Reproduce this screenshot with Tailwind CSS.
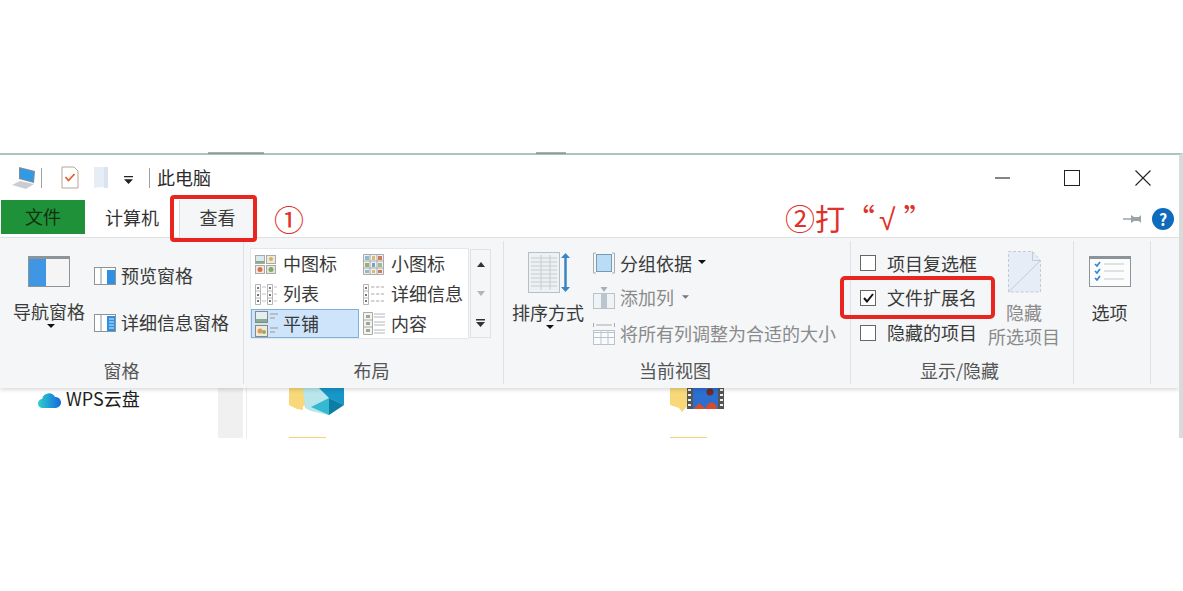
<!DOCTYPE html>
<html lang="zh-CN">
<head>
<meta charset="UTF-8" />
<title>此电脑</title>
<script src="https://cdn.jsdelivr.net/npm/@tailwindcss/browser@4"></script>
</head>
<body class="bg-white h-[591px] overflow-hidden text-[18px] leading-[24px] text-[#3a3a3a] [font-family:'Noto_Sans_CJK_SC','Liberation_Sans',sans-serif]">
<div class="pt-[153px] relative">
  <!-- window -->
  <div class="w-[1183px] h-[285px] overflow-hidden border-t-2 border-t-[#a9c6bc] border-r-4 border-r-[#d5dcda] bg-white flex flex-col">

    <!-- title bar -->
    <div class="h-[45px] flex items-center shrink-0">
      <svg class="ml-[12px] w-[24px] h-[22px]" viewBox="0 0 24 22"><path d="M7 0l16 4-1 12-15-4z" fill="#7f8c96"/><path d="M8 1.500l14 3.500-1 9.500-13-3.500z" fill="#2f9be6"/><path d="M0 18l8-4 14 3-8 5z" fill="#c9ced2"/></svg>
      <div class="ml-[5px] w-px h-[20px] bg-[#a0a0a0]"></div>
      <svg class="ml-[19px] w-[18px] h-[23px]" viewBox="0 0 18 23"><path d="M1 1h12l4 4v17H1z" fill="#fff" stroke="#b9a698"/><path d="M4.500 11l3 3.500L13.500 8" fill="none" stroke="#e5602a" stroke-width="1.800"/></svg>
      <svg class="ml-[15px] w-[15px] h-[23px]" viewBox="0 0 15 23"><path d="M0 1h14v21l-6-1-8 1z" fill="#e6edf5"/><path d="M10 1h4v21h-4z" fill="#dbe4ee"/></svg>
      <svg class="ml-[15px] w-[9px] h-[9px] mt-[5px]" viewBox="0 0 10 10"><path d="M0 0h10v1.500H0zM0 3.500h10L5 9z" fill="#222"/></svg>
      <div class="ml-[16px] w-px h-[20px] bg-[#a0a0a0]"></div>
      <span class="ml-[7px] -translate-y-px text-[#2b2b2b]">此电脑</span>
      <svg class="ml-[784px] w-[16px] h-[16px]" viewBox="0 0 16 16"><path d="M0 8h15" stroke="#333" stroke-width="1.200"/></svg>
      <svg class="ml-[53px] w-[16px] h-[16px]" viewBox="0 0 16 16"><rect x=".5" y=".5" width="15" height="15" fill="none" stroke="#222"/></svg>
      <svg class="ml-[55px] w-[16px] h-[16px]" viewBox="0 0 16 16"><path d="M.5.500l15 15M15.500.500l-15 15" stroke="#222" stroke-width="1.100"/></svg>
    </div>

    <!-- tabs -->
    <div class="h-[38px] flex shrink-0 border-b border-[#e2e4e6]">
      <div class="ml-px w-[84px] h-[34px] bg-[#1f9139] text-[#12300f] flex items-center justify-center"><span class="-translate-y-px">文件</span></div>
      <div class="ml-[20px] h-[34px] flex items-center text-[#333]">计算机</div>
      <div class="ml-[20px] w-[76px] h-[38px] bg-[#f4f6f8] border-l border-[#d8dadd] flex items-center justify-center"><span class="-translate-y-[2px]">查看</span></div>
      <div class="ml-auto mr-[5px] h-[34px] flex items-center gap-[10px] pt-[3px]">
        <svg class="w-[19px] h-[10px]" viewBox="0 0 19 10"><path d="M0 5h8" stroke="#9aa3a7" stroke-width="1.500"/><path d="M8 1l3 2h5l2-2v8l-2-2h-5l-3 2z" fill="#9aa3a7"/></svg>
        <div class="w-[22px] h-[22px] rounded-full bg-[#0f6cbd] text-white text-[16px] font-bold flex items-center justify-center">?</div>
      </div>
    </div>

    <!-- ribbon -->
    <div class="h-[150px] shrink-0 bg-[#f4f6f8] flex pt-[3px] pb-[4px] relative z-10 shadow-[0_2px_4px_rgba(0,0,0,0.14)]">

      <!-- panes -->
      <div class="w-[244px] border-r border-[#dfe2e5] flex flex-col">
        <div class="h-[119px] flex">
          <div class="w-[72px] ml-[13px] pt-[15px] flex flex-col items-center">
            <svg class="w-[42px] h-[31px]" viewBox="0 0 42 31"><rect x=".5" y=".5" width="41" height="30" fill="#f5f5f5" stroke="#8d9499"/><rect x="1" y="3" width="17" height="27" fill="#3f97e4"/><rect x="1" y="1" width="40" height="2" fill="#8d9499"/></svg>
            <span class="mt-[12px] w-[72px] whitespace-nowrap">导航窗格</span>
            <svg class="w-[8px] h-[4px] mt-px ml-[4px]" viewBox="0 0 8 4"><path d="M0 0h8L4 4z" fill="#111"/></svg>
          </div>
          <div class="ml-[9px] pt-[23px] flex flex-col gap-[23px] [&_span]:-translate-y-px">
            <div class="flex items-center gap-[5px]">
              <svg class="w-[22px] h-[18px]" viewBox="0 0 22 18"><rect x=".5" y=".5" width="21" height="17" fill="#fff" stroke="#8d9499"/><path d="M7 1v16" stroke="#8d9499"/><rect x="13" y="3" width="8" height="14" fill="#2f8fe0"/></svg>
              <span>预览窗格</span>
            </div>
            <div class="flex items-center gap-[5px]">
              <svg class="w-[22px] h-[18px]" viewBox="0 0 22 18"><rect x=".5" y=".5" width="21" height="17" fill="#fff" stroke="#8d9499"/><path d="M7 1v16" stroke="#8d9499"/><rect x="13" y="2" width="8" height="15" fill="#2f8fe0"/><path d="M15 5h5M15 8h5M15 11h5M15 14h5" stroke="#d7ebfb"/></svg>
              <span class="whitespace-nowrap">详细信息窗格</span>
            </div>
          </div>
        </div>
        <div class="h-[24px] text-center text-[#555] -translate-y-[2px]">窗格</div>
      </div>

      <!-- layout -->
      <div class="w-[260px] border-r border-[#dfe2e5] flex flex-col">
        <div class="h-[119px] flex pt-[8px] pl-[7px] items-start">
          <div class="w-[217px] h-[89px] bg-white outline outline-[#e4e7ea] grid grid-cols-[108px_109px] grid-rows-[30px_30px_29px] [&_span]:-translate-y-px">
            <div class="flex items-center pl-[4px]">
              <svg class="w-[21px] h-[19px] mr-[7px]" viewBox="0 0 21 19"><rect x=".5" y=".5" width="9" height="8" fill="#dbe9ee" stroke="#aaa"/><path d="M1 6h8v2H1z" fill="#7fae88"/><rect x="11.500" y=".5" width="9" height="8" fill="#e8ecd8" stroke="#aaa"/><circle cx="16" cy="4" r="2" fill="#d9b060"/><rect x=".5" y="10.500" width="9" height="8" fill="#f3e9e2" stroke="#aaa"/><circle cx="5" cy="14.500" r="2.500" fill="#d5714f"/><rect x="11.500" y="10.500" width="9" height="8" fill="#e0e9d5" stroke="#aaa"/><circle cx="16" cy="14.500" r="2.500" fill="#86a86c"/></svg>
              <span>中图标</span>
            </div>
            <div class="flex items-center pl-[4px]">
              <svg class="w-[21px] h-[21px] mr-[7px]" viewBox="0 0 21 21"><path d="M.5.500h20v20H.5zM.5 7h20M.5 14h20M7 .5v20M14 .5v20" fill="#eef1f2" stroke="#aaa"/><path d="M2 2h4v4H2z" fill="#8fb8d3"/><path d="M9 2h3v4H9z" fill="#d3c078"/><path d="M15 2h4v4h-4z" fill="#d2785c"/><path d="M2 9h4v4H2z" fill="#98b076"/><path d="M9 9h3v4H9z" fill="#78a3c8"/><path d="M15 9h4v4h-4z" fill="#9cbc8c"/><path d="M2 16h4v3H2z" fill="#8fb8d3"/><path d="M9 16h3v3H9z" fill="#d8ba70"/><path d="M15 16h4v3h-4z" fill="#d2785c"/></svg>
              <span>小图标</span>
            </div>
            <div class="flex items-center pl-[4px]">
              <svg class="w-[22px] h-[21px] mr-[6px]" viewBox="0 0 22 21"><path d="M.5.500h5v20h-5zM.5 7h5M.5 14h5M12.500.500h5v20h-5zM12.500 7h5M12.500 14h5" fill="#fff" stroke="#b5b5b5"/><path d="M2 3h2v2H2zM2 10h2v2H2zM2 16h2v2H2zM14 3h2v2h-2zM14 10h2v2h-2zM14 16h2v2h-2z" fill="#777"/><path d="M7 3h4M7 10h4M7 17h4M19 3h3M19 10h3M19 17h3" stroke="#c0c0c0"/></svg>
              <span>列表</span>
            </div>
            <div class="flex items-center pl-[4px]">
              <svg class="w-[21px] h-[21px] mr-[7px]" viewBox="0 0 21 21"><path d="M.5.500h5v20h-5zM.5 7h5M.5 14h5" fill="#fff" stroke="#b5b5b5"/><path d="M2 3h2v2H2zM2 10h2v2H2zM2 16h2v2H2z" fill="#777"/><path d="M8 3h13M8 10h13M8 17h13" stroke="#a8a8a8" stroke-dasharray="3.500 1.500"/></svg>
              <span class="whitespace-nowrap">详细信息</span>
            </div>
            <div class="flex items-center pl-[3px] bg-[#cde4fb] border border-[#7fb0de]">
              <svg class="w-[24px] h-[26px] mr-[4px]" viewBox="0 0 24 26"><rect x=".5" y=".5" width="12" height="11" fill="#e3eff3" stroke="#888"/><path d="M1 8h11v3H1z" fill="#86ae8c"/><path d="M15 3h8M15 7h5" stroke="#999"/><rect x=".5" y="14.500" width="12" height="11" fill="#f1ead6" stroke="#888"/><circle cx="5" cy="20" r="2.500" fill="#d99a5a"/><circle cx="9" cy="21" r="2" fill="#8cae68"/><path d="M15 17h8M15 21h5" stroke="#999"/></svg>
              <span>平铺</span>
            </div>
            <div class="flex items-center pl-[4px]">
              <svg class="w-[22px] h-[23px] mr-[6px]" viewBox="0 0 22 23"><path d="M.5.500h9v22h-9zM.5 8h9M.5 15h9" fill="#f2f4f5" stroke="#aaa"/><path d="M3 3h4v3H3zM3 10h4v3H3zM3 17h4v3H3z" fill="#a5a58c"/><path d="M11 2h11M11 5h11M11 10h11M11 13h11M11 18h11M11 21h11" stroke="#b0b8bc"/></svg>
              <span>内容</span>
            </div>
          </div>
          <div class="ml-[2px] w-[21px] h-[89px] border border-[#e0e3e6] flex flex-col">
            <div class="h-[29px] flex items-center justify-center"><svg class="w-[8px] h-[5px]" viewBox="0 0 8 5"><path d="M4 0l4 5H0z" fill="#333"/></svg></div>
            <div class="h-[29px] flex items-center justify-center"><svg class="w-[8px] h-[5px]" viewBox="0 0 8 5"><path d="M0 0h8L4 5z" fill="#b5b5b5"/></svg></div>
            <div class="h-[29px] flex items-center justify-center"><svg class="w-[9px] h-[8px]" viewBox="0 0 9 8"><path d="M0 0h9v1.500H0zM0 3h9L4.500 8z" fill="#333"/></svg></div>
          </div>
        </div>
        <div class="h-[24px] text-center text-[#555] pr-[4px] -translate-y-[2px]">布局</div>
      </div>

      <!-- current view -->
      <div class="w-[347px] border-r border-[#dfe2e5] flex flex-col">
        <div class="h-[119px] flex pl-[8px]">
          <div class="w-[72px] pt-[11px] flex flex-col items-center">
            <svg class="w-[42px] h-[41px] ml-[2px]" viewBox="0 0 42 41"><rect x=".5" y=".5" width="31" height="40" fill="#eef1f3" stroke="#b9c0c5"/><path d="M3 6h26M3 10h26M3 14h26M3 18h26M3 22h26M3 26h26M3 30h26M3 34h26M13 3v35M22 3v35" stroke="#c6ccd0"/><path d="M37.500 3v35" stroke="#3a86c4" stroke-width="2.500"/><path d="M33 6l4.500-5L42 6zM33 35l4.500 5 4.500-5z" fill="#3a86c4"/></svg>
            <span class="mt-[7px] whitespace-nowrap">排序方式</span>
            <svg class="w-[8px] h-[4px] mt-px ml-[4px]" viewBox="0 0 8 4"><path d="M0 0h8L4 4z" fill="#111"/></svg>
          </div>
          <div class="ml-[9px] pt-[10px] flex flex-col gap-[11px] whitespace-nowrap">
            <div class="flex items-center gap-[5px]">
              <svg class="w-[22px] h-[22px]" viewBox="0 0 22 22"><path d="M3 1H.5v20H3M19 1h2.500v20H19" fill="none" stroke="#a5adb2"/><rect x="3.500" y="2.500" width="15" height="17" fill="#b9dcf7" stroke="#7d98ad"/></svg>
              <span>分组依据</span>
              <svg class="w-[8px] h-[4px] ml-[1px] -mt-[2px]" viewBox="0 0 8 4"><path d="M0 0h8L4 4z" fill="#111"/></svg>
            </div>
            <div class="flex items-center gap-[5px] text-[#8a8a8a]">
              <svg class="w-[22px] h-[22px]" viewBox="0 0 22 22"><rect x=".5" y="6.500" width="21" height="15" fill="#f0f3f5" stroke="#b8c3cb"/><rect x="8" y="7" width="6" height="14" fill="#b9c6d0"/><path d="M7.500 0h7L11 5z" fill="#a9b0b5"/></svg>
              <span class="-translate-y-px">添加列</span>
              <svg class="w-[7px] h-[4px] ml-[3px] -mt-[2px]" viewBox="0 0 8 4"><path d="M0 0h8L4 4z" fill="#777"/></svg>
            </div>
            <div class="flex items-center gap-[5px] text-[#8a8a8a] mt-px">
              <svg class="w-[22px] h-[22px]" viewBox="0 0 22 22"><path d="M.5 0v4M21.500 0v4M3 2h16" stroke="#a5adb2"/><rect x=".5" y="7.500" width="21" height="14" fill="#fafbfc" stroke="#b8c3cb"/><path d="M1 9.500h20M8 8v13M15 8v13M1 14.500h20" stroke="#b8c3cb"/></svg>
              <span class="-translate-y-px">将所有列调整为合适的大小</span>
            </div>
          </div>
        </div>
        <div class="h-[24px] text-center text-[#555] pr-[4px] -translate-y-[2px]">当前视图</div>
      </div>

      <!-- show / hide -->
      <div class="w-[223px] border-r border-[#dfe2e5] flex flex-col">
        <div class="h-[119px] flex pl-[9px]">
          <div class="pt-[10px] flex flex-col gap-[11px] whitespace-nowrap">
            <div class="flex items-center gap-[11px]"><div class="w-[16px] h-[16px] bg-white border border-[#666]"></div><span>项目复选框</span></div>
            <div class="flex items-center gap-[11px]">
              <div class="w-[16px] h-[16px] bg-white border border-[#666] flex items-center justify-center"><svg class="w-[11px] h-[10px]" viewBox="0 0 11 10"><path d="M1 5l3 3.500L10 1" fill="none" stroke="#111" stroke-width="2"/></svg></div>
              <span class="-translate-y-px">文件扩展名</span>
            </div>
            <div class="flex items-center gap-[11px]"><div class="w-[16px] h-[16px] bg-white border border-[#666]"></div><span class="-translate-y-px">隐藏的项目</span></div>
          </div>
          <div class="ml-[11px] w-[72px] pt-[10px] flex flex-col items-center text-[#8a8a8a] whitespace-nowrap">
            <svg class="w-[33px] h-[42px]" viewBox="0 0 33 42"><path d="M.5 41V.5h24l8 9V41z" fill="#e6edf7"/><path d="M.5 41V.5h24l8 9V41z" fill="none" stroke="#c4cbd3" stroke-dasharray="3 2"/><path d="M.5 41L32.500 9.500M24.500.5v9h8" fill="none" stroke="#c4cbd3"/></svg>
            <span class="mt-[7px]">隐藏</span>
            <span>所选项目</span>
          </div>
        </div>
        <div class="h-[24px] text-center text-[#555] pr-[5px] -translate-y-[2px]">显示/隐藏</div>
      </div>

      <!-- options -->
      <div class="w-[77px] border-r border-[#dfe2e5] pt-[15px] pr-[5px] flex flex-col items-center">
        <svg class="w-[42px] h-[31px]" viewBox="0 0 42 31"><rect x=".5" y=".5" width="41" height="30" fill="#fbfcfc" stroke="#8d9499"/><rect x="1" y="1" width="40" height="2" fill="#8d9499"/><path d="M6 8l2 2 3-4M6 15l2 2 3-4M6 22l2 2 3-4" fill="none" stroke="#2f86cf" stroke-width="1.600"/><path d="M15 8h20M15 15h20M15 23h20" stroke="#c5c9cc"/></svg>
        <span class="mt-[13px]">选项</span>
      </div>
    </div>

    <!-- under the ribbon -->
    <div class="flex-1 flex bg-white">
      <div class="w-[218px] pl-[38px] pt-px flex items-start">
        <svg class="w-[23px] h-[19px] mt-px" viewBox="0 0 23 19"><defs><linearGradient id="wps" x1="0" y1="0" x2="1" y2="0"><stop offset="0" stop-color="#2fd0c8"/><stop offset="1" stop-color="#1468e0"/></linearGradient></defs><path d="M5 18a4.500 4.500 0 0 1-1-9 7 7 0 0 1 13-2 5.500 5.500 0 0 1 1 11z" fill="url(#wps)"/></svg>
        <span class="ml-[5px] text-[#1f1f1f] -translate-y-[3px]">WPS云盘</span>
      </div>
      <div class="w-[25px] bg-[#f0f0f0]"></div>
      <div class="ml-[3px] w-px bg-[#ececec]"></div>
      <div class="pl-[42px] w-[423px] flex flex-col">
        <svg class="w-[55px] h-[27px]" viewBox="0 0 55 27"><path d="M0 0h20v17l-6 1v4l-6-1-8-4z" fill="#f8d878"/><path d="M14 0h41v17l-15 10-18-4-6-3z" fill="#b9e6ea"/><path d="M30 0h25v17l-15-7z" fill="#1796c8"/><path d="M22 19l18-9v17z" fill="#35b9d3"/><path d="M40 10l15 7-15 10z" fill="#0e7da6"/></svg>
        <div class="mt-[22px] w-[37px] h-[2px] shrink-0 bg-[#f5d27a]"></div>
      </div>
      <div class="w-[200px] flex flex-col">
        <svg class="w-[54px] h-[27px]" viewBox="0 0 54 27"><path d="M0 0h20v15l-8 9-3-4-9-3z" fill="#f8d878"/><rect x="17" y="0" width="37" height="21" fill="#555"/><rect x="23" y="0" width="25" height="21" fill="#2b6fd0"/><path d="M24 21l5-6 7 6zM36 21a5 6 0 0 1 11 0z" fill="#d94c2a"/><circle cx="40" cy="4" r="3.500" fill="#7a2a20"/><path d="M18 2h3M18 7h3M18 12h3M18 17h3M50 2h3M50 7h3M50 12h3M50 17h3" stroke="#eee" stroke-width="2"/></svg>
        <div class="mt-[22px] w-[37px] h-[2px] shrink-0 bg-[#f5d27a]"></div>
      </div>
    </div>
  </div>

  <!-- red annotations drawn over the window -->
  <div class="absolute z-20 left-[170px] top-[195px] w-[87px] h-[47px] border-4 border-[#e8261f] rounded-[4px]"></div>
  <div class="absolute z-20 left-[840px] top-[276px] w-[155px] h-[43px] border-4 border-[#e8261f] rounded-[5px]"></div>
  <div class="absolute z-20 left-[274px] top-[196px] text-[30px] leading-[44px] text-[#e0322b]">①</div>
  <div class="absolute z-20 left-[785px] top-[195px] text-[30px] leading-[44px] text-[#e0322b] whitespace-nowrap">②打“<span class="[font-family:'Liberation_Sans',sans-serif] ml-[4px] mr-[8px]">√</span>”</div>
  <!-- bits of the window behind -->
  <div class="absolute left-[208px] top-[152px] w-[56px] h-[2px] bg-[#6f7f78]/60"></div>
  <div class="absolute left-[536px] top-[152px] w-[30px] h-[2px] bg-[#6f7f78]/60"></div>
</div>
</body>
</html>
